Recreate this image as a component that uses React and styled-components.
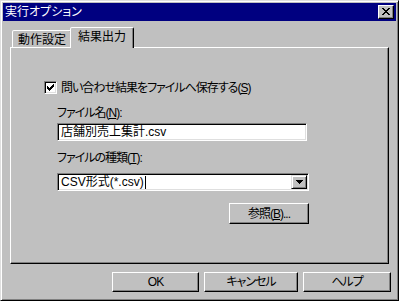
import React from "react";
import styled, { createGlobalStyle } from "styled-components";

const Global = createGlobalStyle`
  html, body { margin: 0; padding: 0; background: #c0c0c0; }
  body {
    font-family: "Liberation Sans", "Noto Sans CJK JP", sans-serif;
    font-size: 12px;
    color: #000;
    font-feature-settings: "palt";
  }
  * { box-sizing: border-box; }
`;

const Window = styled.div`
  width: 399px;
  height: 301px;
  background: #c0c0c0;
  border: 1px solid;
  border-color: #dfdfdf #000 #000 #dfdfdf;
  box-shadow: inset 1px 1px #fff, inset -1px -1px #808080;
  padding: 2px;
  display: flex;
  flex-direction: column;
`;

const TitleBar = styled.div`
  height: 18px;
  background: #000080;
  display: flex;
  align-items: center;
  justify-content: space-between;
  padding: 0 2px 0 2px;
`;

const Title = styled.span`
  color: #fff;
  font-size: 12px;
  line-height: 14px;
`;

const CloseButton = styled.div`
  width: 16px;
  height: 14px;
  background: #c0c0c0;
  border: 1px solid;
  border-color: #fff #000 #000 #fff;
  box-shadow: inset -1px -1px #808080;
  display: flex;
  align-items: center;
  justify-content: center;
  padding-bottom: 1px;
`;

const Body = styled.div`
  flex: 1;
  display: flex;
  flex-direction: column;
  padding-bottom: 6px;
`;

const TabStrip = styled.div`
  height: 26px;
  display: flex;
  align-items: flex-end;
  padding-left: 9px;
`;

const Tab = styled.div`
  position: relative;
  height: ${(p) => (p.$active ? "21px" : "17px")};
  margin: ${(p) => (p.$active ? "0 -2px -1px -2px" : "0")};
  padding: 2px ${(p) => (p.$active ? "7px" : "5px")} 0;
  background: #c0c0c0;
  border: 1px solid;
  border-bottom: none;
  border-color: #fff #000 transparent #fff;
  border-radius: 2px 2px 0 0;
  box-shadow: inset -1px 0 #808080;
  line-height: 14px;
  z-index: ${(p) => (p.$active ? 2 : 1)};
  white-space: nowrap;
`;

const Panel = styled.div`
  height: 217px;
  margin: 0 7px;
  border: 1px solid;
  border-color: #fff #000 #000 #fff;
  box-shadow: inset -1px -1px #808080;
  padding: 33px 0 0 33px;
  display: flex;
  flex-direction: column;
  align-items: flex-start;
`;

const CheckRow = styled.div`
  display: flex;
  align-items: center;
  height: 13px;
  gap: 4px;
  line-height: 14px;
`;

const CheckBox = styled.div`
  width: 13px;
  height: 13px;
  background: #fff;
  border: 1px solid;
  border-color: #808080 #fff #fff #808080;
  box-shadow: inset 1px 1px #000, inset -1px -1px #dfdfdf;
  display: flex;
  align-items: center;
  justify-content: center;
`;

const Caption = styled.span`
  letter-spacing: -1px;
  white-space: nowrap;
`;

const FieldGroup = styled.div`
  margin-left: 13px;
  margin-top: 12px;
  width: 252px;
  display: flex;
  flex-direction: column;
`;

const Label = styled.div`
  line-height: 14px;
  height: 14px;
  margin-top: ${(p) => p.$top || 0}px;
  white-space: nowrap;
  letter-spacing: -1px;
`;

const Sunken = styled.div`
  height: 18px;
  width: ${(p) => p.$w}px;
  margin-top: ${(p) => p.$top || 0}px;
  background: #fff;
  border: 1px solid;
  border-color: #808080 #fff #fff #808080;
  box-shadow: inset 1px 1px #000, inset -1px -1px #dfdfdf;
  display: flex;
  align-items: center;
  padding-left: 3px;
  line-height: 14px;
  white-space: nowrap;
`;

const ComboText = styled.div`
  flex: 1;
  display: flex;
  align-items: center;
`;

const Caret = styled.span`
  display: inline-block;
  width: 1px;
  height: 13px;
  background: #000;
  margin-left: 1px;
`;

const DropButton = styled.div`
  width: 16px;
  height: 14px;
  margin-right: 1px;
  background: #c0c0c0;
  border: 1px solid;
  border-color: #dfdfdf #000 #000 #dfdfdf;
  box-shadow: inset 1px 1px #fff, inset -1px -1px #808080;
  display: flex;
  align-items: center;
  justify-content: center;
`;

const Button = styled.div`
  width: ${(p) => p.$w || 88}px;
  height: ${(p) => p.$h || 20}px;
  background: #c0c0c0;
  border: 1px solid;
  border-color: #fff #000 #000 #fff;
  box-shadow: inset -1px -1px #808080;
  display: flex;
  align-items: center;
  justify-content: center;
  line-height: 14px;
  white-space: nowrap;
  letter-spacing: -1px;
  align-self: ${(p) => p.$self || "auto"};
  margin-top: ${(p) => p.$top || 0}px;
`;

const ButtonRow = styled.div`
  display: flex;
  justify-content: flex-end;
  gap: 5px;
  margin-top: 8px;
  padding-right: 5px;
`;

export default function App() {
  return (
    <>
      <Global />
      <Window>
        <TitleBar>
          <Title>実行オプション</Title>
          <CloseButton>
            <svg width="8" height="7" viewBox="0 0 8 7">
              <path d="M0 0h2v1h1v1h2V1h1V0h2v1H7v1H6v1H5v1h1v1h1v1h1v1H6V6H5V5H3v1H2v1H0V6h1V5h1V4h1V3H2V2H1V1H0z" fill="#000" />
            </svg>
          </CloseButton>
        </TitleBar>
        <Body>
          <TabStrip>
            <Tab>動作設定</Tab>
            <Tab $active>結果出力</Tab>
          </TabStrip>
          <Panel>
            <CheckRow>
              <CheckBox>
                <svg width="7" height="7" viewBox="0 0 7 7">
                  <path d="M6 0h1v3H6v1H5v1H4v1H3v1H2V6H1V5H0V2h1v1h1v1h1V3h1V2h1V1h1z" fill="#000" />
                </svg>
              </CheckBox>
              <Caption>問い合わせ結果をファイルへ保存する(<u>S</u>)</Caption>
            </CheckRow>
            <FieldGroup>
              <Label>ファイル名(<u>N</u>):</Label>
              <Sunken $w={250} $top={3}>店舗別売上集計.csv</Sunken>
              <Label $top={10}>ファイルの種類(<u>T</u>):</Label>
              <Sunken $w={252} $top={8}>
                <ComboText>
                  CSV形式(*.csv)<Caret />
                </ComboText>
                <DropButton>
                  <svg width="7" height="4" viewBox="0 0 7 4">
                    <path d="M0 0h7v1H6v1H5v1H4v1H3V3H2V2H1V1H0z" fill="#000" />
                  </svg>
                </DropButton>
              </Sunken>
              <Button $w={80} $h={21} $self="flex-end" $top={12}>
                参照(<u>B</u>)...
              </Button>
            </FieldGroup>
          </Panel>
          <ButtonRow>
            <Button $w={87}>OK</Button>
            <Button $w={94}>キャンセル</Button>
            <Button $w={88}>ヘルプ</Button>
          </ButtonRow>
        </Body>
      </Window>
    </>
  );
}
